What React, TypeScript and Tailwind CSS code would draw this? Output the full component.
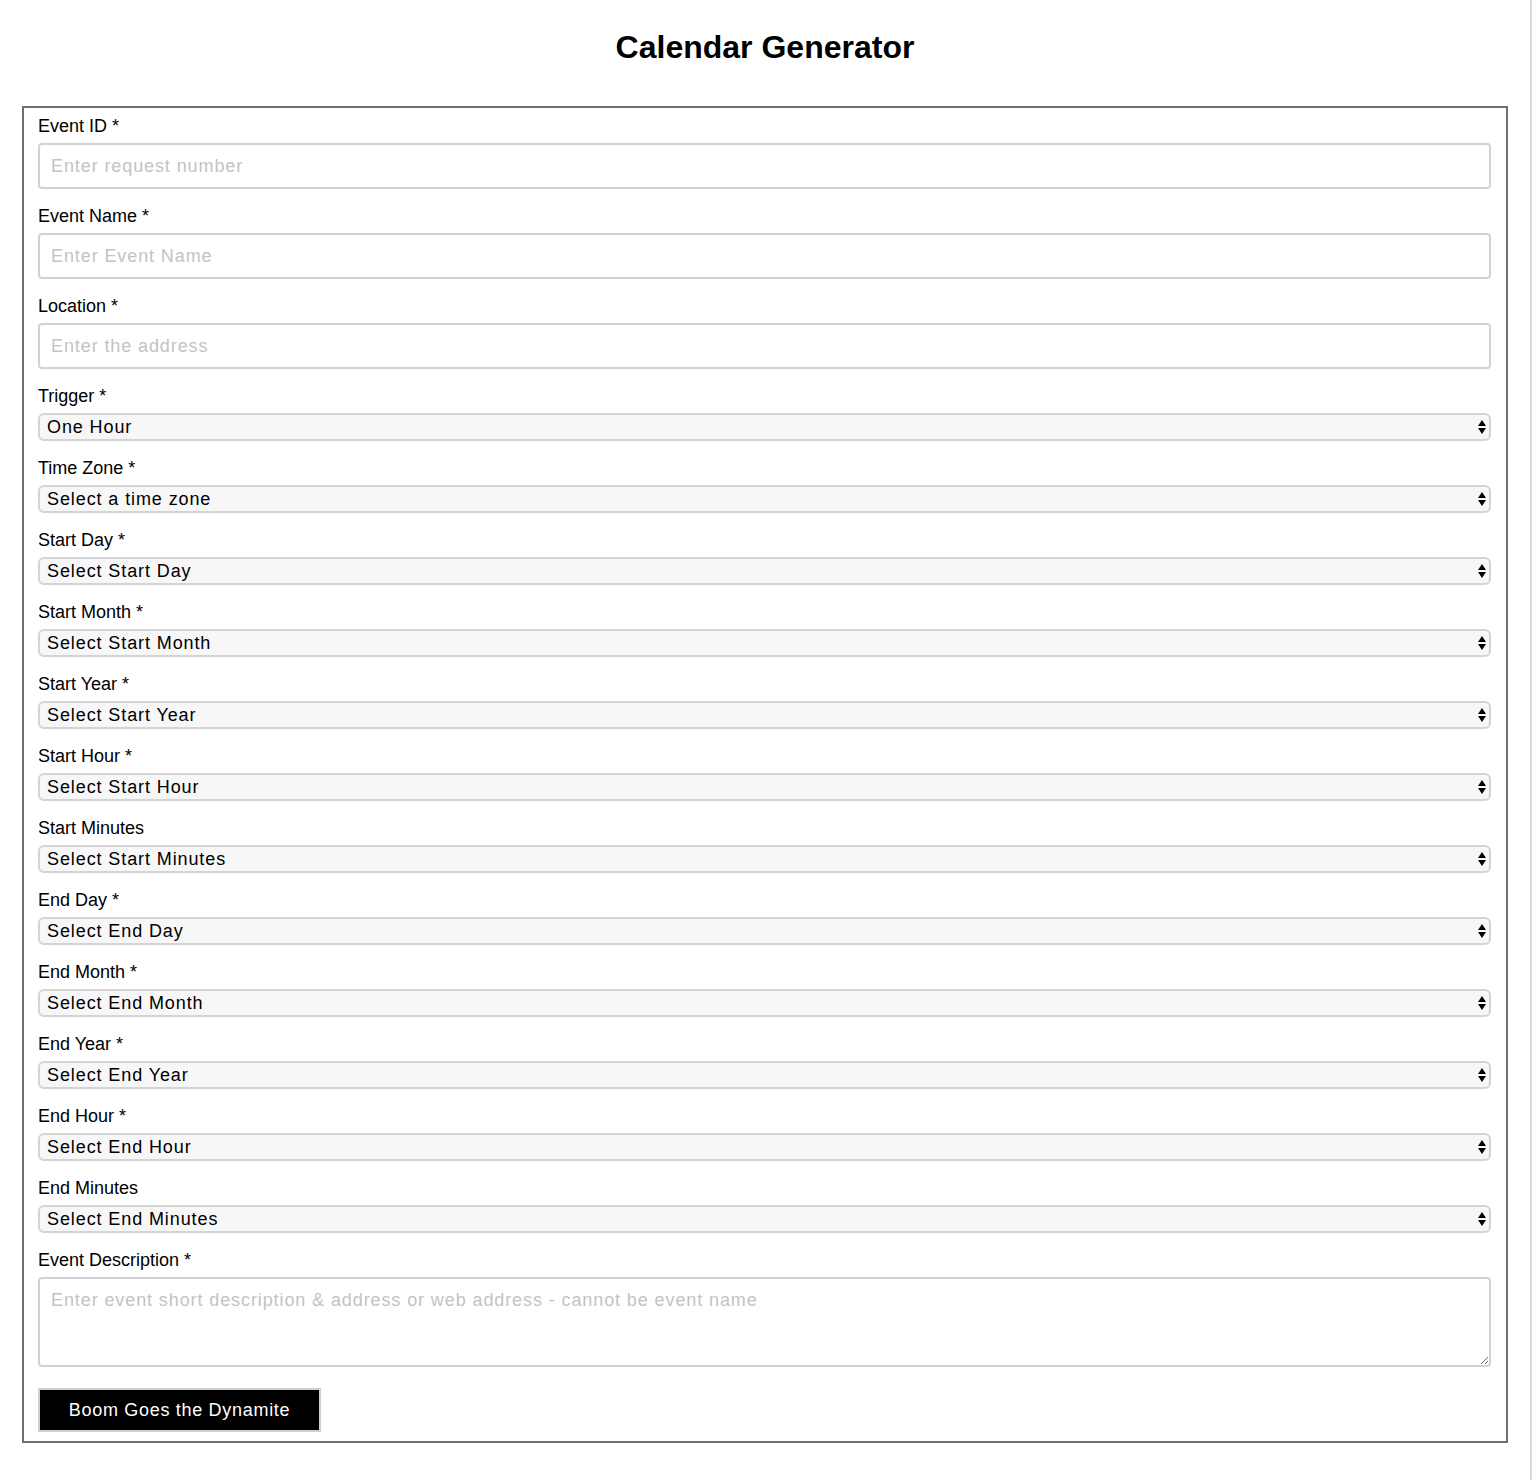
import React from "react";

const textFields = [
  { label: "Event ID *", placeholder: "Enter request number" },
  { label: "Event Name *", placeholder: "Enter Event Name" },
  { label: "Location *", placeholder: "Enter the address" },
];

const selectFields = [
  { label: "Trigger *", value: "One Hour" },
  { label: "Time Zone *", value: "Select a time zone" },
  { label: "Start Day *", value: "Select Start Day" },
  { label: "Start Month *", value: "Select Start Month" },
  { label: "Start Year *", value: "Select Start Year" },
  { label: "Start Hour *", value: "Select Start Hour" },
  { label: "Start Minutes", value: "Select Start Minutes" },
  { label: "End Day *", value: "Select End Day" },
  { label: "End Month *", value: "Select End Month" },
  { label: "End Year *", value: "Select End Year" },
  { label: "End Hour *", value: "Select End Hour" },
  { label: "End Minutes", value: "Select End Minutes" },
];

function Label({ children }: { children: React.ReactNode }) {
  return (
    <label className="block text-[18px] leading-[23px] text-black font-['Liberation_Sans',Arial,sans-serif]">
      {children}
    </label>
  );
}

function Arrows() {
  return (
    <svg
      width="10"
      height="16"
      viewBox="0 0 10 16"
      className="pointer-events-none absolute right-[4px] top-1/2 -translate-y-1/2"
    >
      <path d="M1 7 L5 1 L9 7 Z" fill="#000" />
      <path d="M1 9 L5 15 L9 9 Z" fill="#000" />
    </svg>
  );
}

export default function App() {
  return (
    <div className="flex w-[1532px] min-h-[1480px] bg-white">
      <div className="w-[1530px] pt-[29px] pb-[37px]">
        <h1 className="text-center text-[32px] leading-[37px] font-bold text-black font-['Liberation_Sans',Arial,sans-serif]">
          Calendar Generator
        </h1>
        <form
          className="mx-[22px] mt-[40px] border-2 border-[#6f6f6f] pl-[14px] pr-[15px] pt-[7px] pb-[9px]"
          onSubmit={(e) => e.preventDefault()}
        >
          {textFields.map((f) => (
            <div key={f.label} className="mb-[16px]">
              <Label>{f.label}</Label>
              <input
                type="text"
                placeholder={f.placeholder}
                className="mt-[5px] block h-[46px] w-full rounded-[4px] border-2 border-[#d2d2d2] bg-white px-[11px] text-[18px] tracking-[0.9px] text-black placeholder:text-[#c3c3c3] outline-none font-['Liberation_Sans',Arial,sans-serif]"
              />
            </div>
          ))}
          {selectFields.map((f) => (
            <div key={f.label} className="mb-[16px]">
              <Label>{f.label}</Label>
              <div className="relative mt-[5px] h-[28px]">
                <select
                  defaultValue={f.value}
                  className="block h-[28px] w-full appearance-none rounded-[6px] border-2 border-[#d4d4d4] bg-[#f7f7f7] pl-[7px] pr-[20px] text-[18px] leading-[24px] tracking-[0.9px] text-black outline-none font-['Liberation_Sans',Arial,sans-serif]"
                >
                  <option value={f.value}>{f.value}</option>
                </select>
                <Arrows />
              </div>
            </div>
          ))}
          <div className="mb-[21px]">
            <Label>Event Description *</Label>
            <textarea
              placeholder="Enter event short description & address or web address - cannot be event name"
              className="mt-[5px] block h-[90px] w-full rounded-[4px] border-2 border-[#d2d2d2] bg-white px-[11px] py-[10px] text-[18px] leading-[22px] tracking-[0.9px] text-black placeholder:text-[#c3c3c3] outline-none font-['Liberation_Sans',Arial,sans-serif]"
            />
          </div>
          <button
            type="submit"
            className="block h-[44px] w-[283px] border-2 border-[#cfcfcf] bg-black text-center text-[18px] tracking-[0.7px] text-white font-['Liberation_Sans',Arial,sans-serif]"
          >
            Boom Goes the Dynamite
          </button>
        </form>
      </div>
      <div className="w-[2px] bg-[#d9d9d9]" />
    </div>
  );
}
